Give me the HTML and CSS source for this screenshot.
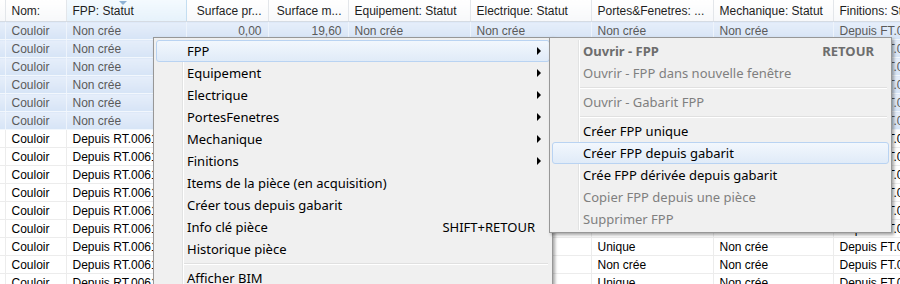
FILE: index.html
```html
<!DOCTYPE html>
<html lang="fr">
<head>
  <meta charset="UTF-8">
  <title>Pièces</title>
  <link rel="stylesheet" href="styles.css">
</head>
<body>
  <table class="grid">
    <colgroup>
      <col class="c-rh"><col class="c-nom"><col class="c-fpp"><col class="c-sp"><col class="c-sm">
      <col class="c-eq"><col class="c-el"><col class="c-pf"><col class="c-me"><col class="c-fi">
    </colgroup>
    <thead>
      <tr>
        <th></th>
        <th>Nom:</th>
        <th class="sorted">FPP: Statut<span class="sort-arrow"></span></th>
        <th class="num">Surface pr...</th>
        <th class="num">Surface m...</th>
        <th>Equipement: Statut</th>
        <th>Electrique: Statut</th>
        <th>Portes&amp;Fenetres: ...</th>
        <th>Mechanique: Statut</th>
        <th>Finitions: Statut</th>
      </tr>
    </thead>
    <tbody>
      <tr class="sel"><td></td><td>Couloir</td><td>Non crée</td><td class="num">0,00</td><td class="num">19,60</td><td>Non crée</td><td>Non crée</td><td>Non crée</td><td>Non crée</td><td>Depuis FT.0061</td></tr>
      <tr class="sel"><td></td><td>Couloir</td><td>Non crée</td><td class="num">0,00</td><td class="num">12,45</td><td>Non crée</td><td>Non crée</td><td>Non crée</td><td>Non crée</td><td>Depuis FT.0061</td></tr>
      <tr class="sel"><td></td><td>Couloir</td><td>Non crée</td><td class="num">0,00</td><td class="num">8,20</td><td>Non crée</td><td>Non crée</td><td>Non crée</td><td>Non crée</td><td>Depuis FT.0061</td></tr>
      <tr class="sel"><td></td><td>Couloir</td><td>Non crée</td><td class="num">0,00</td><td class="num">22,10</td><td>Non crée</td><td>Non crée</td><td>Non crée</td><td>Non crée</td><td>Depuis FT.0061</td></tr>
      <tr class="sel"><td></td><td>Couloir</td><td>Non crée</td><td class="num">0,00</td><td class="num">6,75</td><td>Non crée</td><td>Non crée</td><td>Non crée</td><td>Non crée</td><td>Depuis FT.0061</td></tr>
      <tr class="sel"><td></td><td>Couloir</td><td>Non crée</td><td class="num">0,00</td><td class="num">14,30</td><td>Non crée</td><td>Non crée</td><td>Non crée</td><td>Non crée</td><td>Depuis FT.0061</td></tr>
      <tr><td></td><td>Couloir</td><td>Depuis RT.0061</td><td class="num">18,40</td><td class="num">18,40</td><td>Unique</td><td>Non crée</td><td>Unique</td><td>Non crée</td><td>Depuis FT.0061</td></tr>
      <tr><td></td><td>Couloir</td><td>Depuis RT.0061</td><td class="num">9,80</td><td class="num">9,80</td><td>Unique</td><td>Non crée</td><td>Non crée</td><td>Non crée</td><td>Depuis FT.0061</td></tr>
      <tr><td></td><td>Couloir</td><td>Depuis RT.0061</td><td class="num">11,20</td><td class="num">11,20</td><td>Unique</td><td>Non crée</td><td>Unique</td><td>Non crée</td><td>Depuis FT.0061</td></tr>
      <tr><td></td><td>Couloir</td><td>Depuis RT.0061</td><td class="num">7,65</td><td class="num">7,65</td><td>Unique</td><td>Non crée</td><td>Non crée</td><td>Non crée</td><td>Depuis FT.0061</td></tr>
      <tr><td></td><td>Couloir</td><td>Depuis RT.0061</td><td class="num">16,90</td><td class="num">16,90</td><td>Unique</td><td>Non crée</td><td>Unique</td><td>Non crée</td><td>Depuis FT.0061</td></tr>
      <tr><td></td><td>Couloir</td><td>Depuis RT.0061</td><td class="num">5,40</td><td class="num">5,40</td><td>Unique</td><td>Non crée</td><td>Non crée</td><td>Non crée</td><td>Depuis FT.0061</td></tr>
      <tr><td></td><td>Couloir</td><td>Depuis RT.0061</td><td class="num">13,15</td><td class="num">13,15</td><td>Unique</td><td>Non crée</td><td>Unique</td><td>Non crée</td><td>Depuis FT.0061</td></tr>
      <tr><td></td><td>Couloir</td><td>Depuis RT.0061</td><td class="num">10,00</td><td class="num">10,00</td><td>Unique</td><td>Non crée</td><td>Non crée</td><td>Non crée</td><td>Depuis FT.0061</td></tr>
      <tr><td></td><td>Couloir</td><td>Depuis RT.0061</td><td class="num">21,60</td><td class="num">21,60</td><td>Unique</td><td>Non crée</td><td>Unique</td><td>Non crée</td><td>Depuis FT.0061</td></tr>
    </tbody>
  </table>

  <div class="menu main-menu">
    <div class="item hover">FPP<span class="arrow"></span></div>
    <div class="item">Equipement<span class="arrow"></span></div>
    <div class="item">Electrique<span class="arrow"></span></div>
    <div class="item">PortesFenetres<span class="arrow"></span></div>
    <div class="item">Mechanique<span class="arrow"></span></div>
    <div class="item">Finitions<span class="arrow"></span></div>
    <div class="item">Items de la pièce (en acquisition)</div>
    <div class="item">Créer tous depuis gabarit</div>
    <div class="item">Info clé pièce<span class="shortcut">SHIFT+RETOUR</span></div>
    <div class="item">Historique pièce</div>
    <div class="sep"></div>
    <div class="item">Afficher BIM</div>
  </div>

  <div class="menu sub-menu">
    <div class="item disabled default">Ouvrir - FPP<span class="shortcut">RETOUR</span></div>
    <div class="item disabled">Ouvrir - FPP dans nouvelle fenêtre</div>
    <div class="sep"></div>
    <div class="item disabled">Ouvrir - Gabarit FPP</div>
    <div class="sep"></div>
    <div class="item">Créer FPP unique</div>
    <div class="item hover">Créer FPP depuis gabarit</div>
    <div class="item">Crée FPP dérivée depuis gabarit</div>
    <div class="item disabled">Copier FPP depuis une pièce</div>
    <div class="item disabled">Supprimer FPP</div>
  </div>
</body>
</html>
```

FILE: styles.css
```css
body {
  margin: 0;
  width: 900px;
  height: 284px;
  overflow: hidden;
  position: relative;
  background: #fff;
  font-family: "Liberation Sans", Arial, sans-serif;
}

/* data grid */
.grid {
  border-collapse: collapse;
  table-layout: fixed;
  width: 953px;
  font-size: 12px;
  color: #000;
}
.c-rh { width: 5px; }
.c-nom { width: 61px; }
.c-fpp { width: 120px; }
.c-sp { width: 82px; }
.c-sm { width: 80px; }
.c-eq { width: 122px; }
.c-el { width: 121px; }
.c-pf { width: 122px; }
.c-me { width: 120px; }
.c-fi { width: 120px; }

.grid th {
  position: relative;
  height: 21px;
  padding: 0 6px;
  font-weight: normal;
  text-align: left;
  color: #1e1e1e;
  white-space: nowrap;
  overflow: hidden;
  background: linear-gradient(#ffffff, #f7f8fa);
  border-right: 1px solid #e3e6ea;
  border-bottom: 1px solid #d5dbe3;
}
.grid th.sorted {
  background: linear-gradient(#f4fafe, #e6f2fb);
  border-left: 1px solid #c4def1;
  border-right: 1px solid #c4def1;
}
.sort-arrow {
  position: absolute;
  left: 52px;
  top: 1px;
  width: 0;
  height: 0;
  border-left: 4px solid transparent;
  border-right: 4px solid transparent;
  border-top: 4px solid #8fb2d4;
}
.grid td {
  height: 17px;
  padding: 0 6px;
  white-space: nowrap;
  overflow: hidden;
  border-right: 1px solid #ececec;
  border-bottom: 1px solid #ececec;
}
.grid .num { text-align: right; }
.grid th:first-child, .grid td:first-child { padding: 0; }

.grid tr.sel td {
  color: #5a5a5a;
  background: linear-gradient(#e6eefa, #d6e4f6);
  border-right-color: #eef4fc;
  border-bottom-color: #f2f7fd;
}

/* context menus */
.menu {
  position: absolute;
  top: 37px;
  padding: 2px;
  background: #f0f0f0;
  border: 1px solid #979797;
  box-shadow: 2px 2px 3px rgba(0, 0, 0, 0.35);
  font-family: "Noto Sans", "Open Sans", sans-serif;
  font-size: 13px;
  color: #000;
}
.menu::before {
  content: "";
  position: absolute;
  top: 2px;
  bottom: 2px;
  left: 28px;
  width: 1px;
  background: #e2e3e3;
  border-right: 1px solid #fff;
}
.main-menu {
  left: 153px;
  width: 394px;
  height: 260px;
}
.sub-menu {
  left: 549px;
  width: 337px;
}
.item {
  position: relative;
  display: flex;
  align-items: center;
  height: 22px;
  padding: 0 0 0 30px;
  box-sizing: border-box;
  white-space: nowrap;
  border: 1px solid transparent;
  border-radius: 3px;
}
.item.hover {
  background: linear-gradient(#f2f7fd, #e0ebf8);
  border-color: #b9d3f2;
}
.item.disabled { color: #7f7f7f; }
.item.default { font-weight: bold; color: #6d6d6d; }
.arrow {
  margin-left: auto;
  margin-right: 8px;
  width: 0;
  height: 0;
  border-top: 4px solid transparent;
  border-bottom: 4px solid transparent;
  border-left: 4px solid #000;
}
.shortcut {
  margin-left: auto;
  margin-right: 14px;
}
.sep {
  height: 1px;
  margin: 3px 2px 2px 26px;
  background: #e0e0e0;
  border-bottom: 1px solid #fff;
}
```
